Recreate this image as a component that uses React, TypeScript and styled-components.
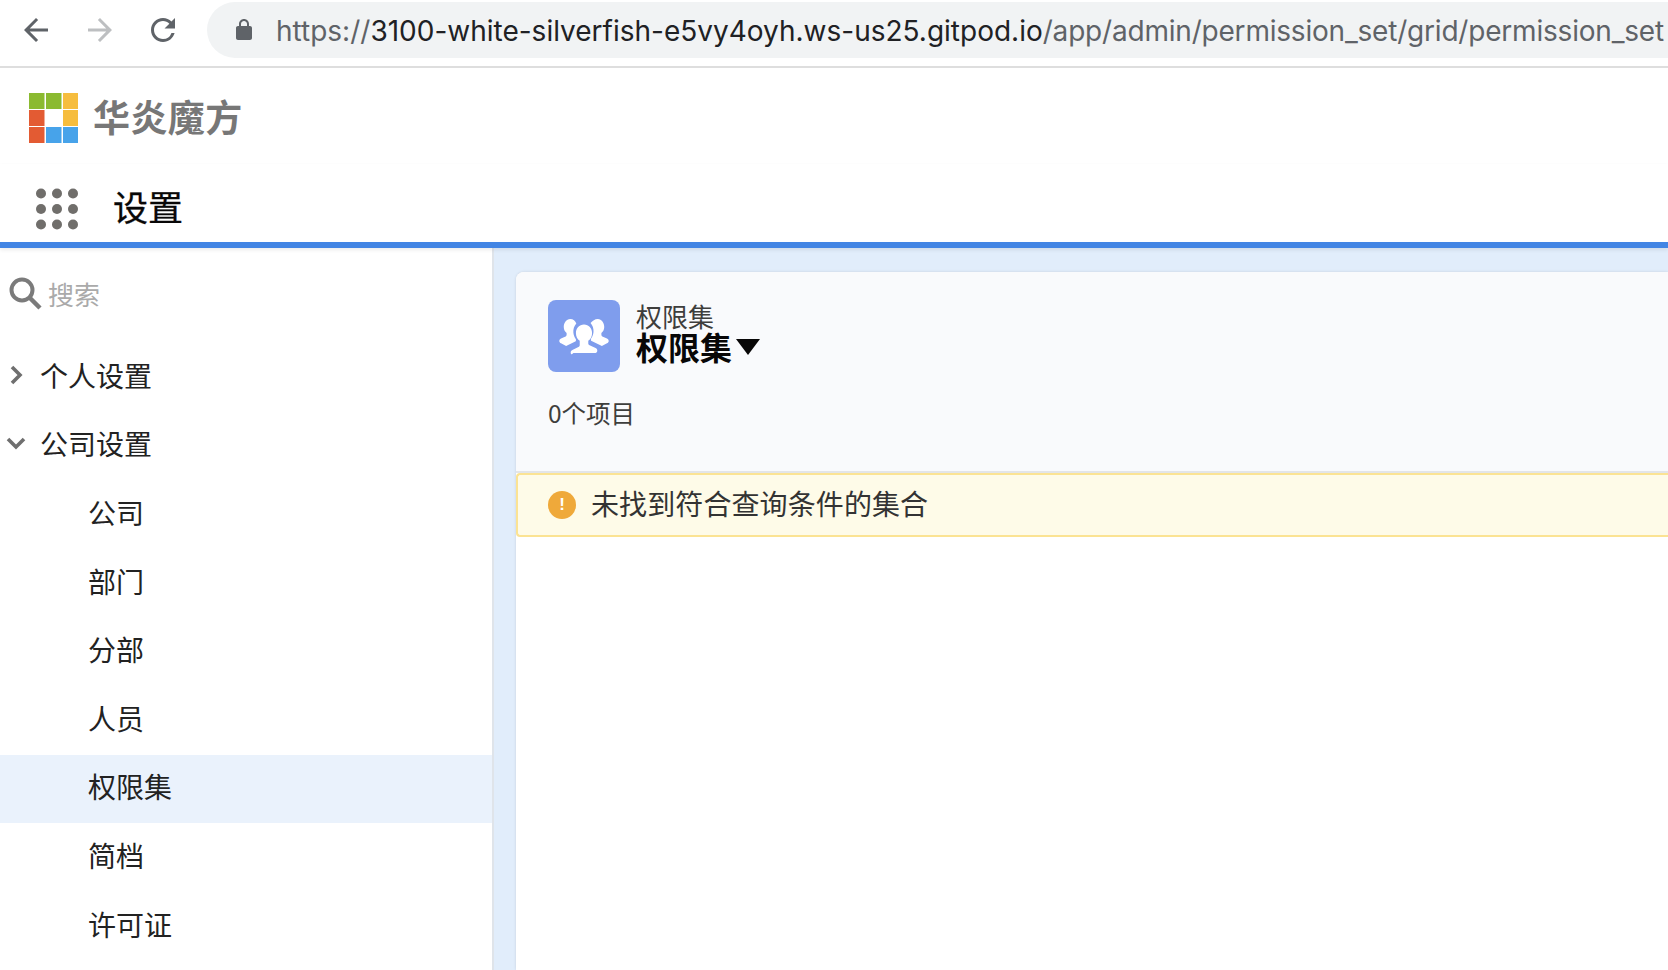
import React from "react";
import styled, { createGlobalStyle } from "styled-components";

const CJK = `"Noto Sans CJK SC", "Noto Sans", sans-serif`;

const Global = createGlobalStyle`
  html, body { margin: 0; padding: 0; background: #fff; overflow: hidden; }
  * { box-sizing: border-box; }
`;
const Page = styled.div`
  width: 1668px; height: 970px; overflow: hidden; display: flex; flex-direction: column;
  font-family: ${CJK}; color: #222;
`;
const BrowserBar = styled.div`
  flex: none; height: 68px; display: flex; align-items: flex-start; border-bottom: 2px solid #dedede;
  padding: 2px 0 0 22px; overflow: hidden;
`;
const NavIcon = styled.svg<{ $color: string; $gap: number }>`
  flex: none; width: 36px; height: 36px; margin: 10px ${p => p.$gap}px 0 -4px; fill: ${p => p.$color};
`;
const AddressBar = styled.div`
  flex: 1; min-width: 0; height: 56px; background: #f1f3f4; border-radius: 28px 0 0 28px;
  display: flex; align-items: center; padding-left: 25px; white-space: nowrap; overflow: hidden;
`;
const Lock = styled.svg`
  flex: none; width: 24px; height: 24px; fill: #5f6368; margin-right: 20px;
`;
const UrlHost = styled.span`
  font-family: Inter, "Liberation Sans", sans-serif; font-size: 28px; color: #202124; padding-top: 1px;
`;
const UrlScheme = styled(UrlHost)`
  color: #5f6368;
`;
const UrlPath = styled(UrlScheme)`
  letter-spacing: -.2px;
`;
const LogoRow = styled.div`
  flex: none; height: 96px; display: flex; align-items: center; padding: 0 0 0 29px; gap: 15px;
`;
const LogoMark = styled.svg`
  flex: none; width: 49px; height: 50px; margin-top: 4px;
`;
const LogoText = styled.div`
  font-size: 37px; font-weight: 700; color: #777; line-height: 50px; letter-spacing: .4px;
`;
const AppBar = styled.div`
  flex: none; height: 84px; display: flex; align-items: center; padding: 0 0 0 35px; gap: 34px;
  border-bottom: 6px solid #4285e4; box-shadow: 0 2px 4px rgba(0,0,0,.08); position: relative; z-index: 1;
`;
const Dots = styled.svg`
  flex: none; width: 44px; height: 42px; fill: #706e6b; margin-top: 12px;
`;
const AppTitle = styled.div`
  font-size: 35px; font-weight: 400; color: #080707; line-height: 50px; margin-top: 6px;
  -webkit-text-stroke: .3px #080707;
`;
const Shell = styled.div`
  flex: 1; min-height: 0; display: flex;
`;
const Sidebar = styled.nav`
  flex: none; width: 494px; background: #fff; border-right: 2px solid #dfe4ea;
`;
const SearchRow = styled.div`
  height: 95px; display: flex; align-items: center; padding: 0 0 4px 9px; gap: 6px;
`;
const SearchIcon = styled.svg`
  flex: none; width: 33px; height: 33px; fill: none; stroke: #7b7b7b; stroke-width: 4;
`;
const SearchHint = styled.div`
  font-size: 26px; color: #aaa; line-height: 40px;
`;
const Row = styled.div<{ $selected?: boolean; $child?: boolean }>`
  height: 68.6px; display: flex; align-items: center; font-size: 28px; color: #222;
  padding: 0 0 5px ${p => (p.$child ? 88 : 0)}px;
  background: ${p => (p.$selected ? "#eaf2fc" : "transparent")};
`;
const ChevronBox = styled.svg`
  flex: none; width: 32px; height: 32px; margin-right: 8px; fill: none; stroke: #6f6f6f; stroke-width: 3.6;
`;
const Main = styled.main`
  flex: 1; min-width: 0; background: #e1edfb; padding: 24px 0 0 22px; display: flex;
`;
const Card = styled.section`
  flex: 1; background: #fff; border-radius: 8px 0 0 0; box-shadow: 0 0 3px rgba(0,0,0,.12);
`;
const CardHeader = styled.header`
  height: 201px; background: #f9fafc; border-radius: 8px 0 0 0; padding: 28px 0 0 32px;
  border-bottom: 2px solid #e3e5e8;
`;
const TitleRow = styled.div`
  display: flex; align-items: center; gap: 16px;
`;
const ObjectIcon = styled.div`
  flex: none; width: 72px; height: 72px; border-radius: 8px; background: #7f9ded;
  display: flex; align-items: center; justify-content: center;
`;
const GroupSvg = styled.svg`
  width: 50px; height: 38px; fill: #fff;
`;
const Titles = styled.div`
  display: flex; flex-direction: column; padding-bottom: 7px;
`;
const Eyebrow = styled.div`
  font-size: 26px; line-height: 28px; color: #3e3e3c;
`;
const TitleLine = styled.div`
  display: flex; align-items: center; gap: 4px; font-size: 32px; line-height: 36px; font-weight: 700; color: #080707;
  margin-top: -2px;
`;
const Caret = styled.svg`
  flex: none; width: 24px; height: 16px; fill: #080707; margin-top: 2px;
`;
const Count = styled.div`
  margin-top: 23px; font-size: 24.5px; line-height: 36px; color: #3e3e3c;
`;
const Alert = styled.div`
  height: 64px; display: flex; align-items: center; gap: 15px; padding-left: 30px;
  background: #fefbe8; border: 2px solid #fbe393; border-right: 0; border-radius: 4px 0 0 4px;
  font-size: 28px; color: #333;
`;
const AlertText = styled.span`
  line-height: 40px; margin-top: -4px; letter-spacing: .1px;
`;
const AlertIcon = styled.div`
  flex: none; width: 28px; height: 28px; border-radius: 50%; background: #efa93a; color: #fff;
  display: flex; align-items: center; justify-content: center;
  font-size: 17px; font-weight: 700; font-family: "Liberation Sans", sans-serif;
`;

const squares: [number, number, string][] = [
  [0, 0, "#8bba30"], [1, 0, "#8bba30"], [2, 0, "#f6bd3e"],
  [0, 1, "#e35b33"], [2, 1, "#f6bd3e"],
  [0, 2, "#e35b33"], [1, 2, "#47a3ea"], [2, 2, "#47a3ea"],
];
const children = ["公司", "部门", "分部", "人员", "权限集", "简档", "许可证"];

export default function App() {
  return (
    <Page>
      <Global />
      <BrowserBar>
        <NavIcon $color="#5f6368" $gap={32} viewBox="0 0 24 24">
          <path d="M20 11H7.83l5.59-5.59L12 4l-8 8 8 8 1.41-1.41L7.83 13H20v-2z" />
        </NavIcon>
        <NavIcon $color="#bdbfc1" $gap={31} viewBox="0 0 24 24">
          <path d="M4 11h12.17l-5.59-5.59L12 4l8 8-8 8-1.41-1.41L16.17 13H4v-2z" />
        </NavIcon>
        <NavIcon $color="#5f6368" $gap={26} viewBox="0 0 24 24">
          <path d="M17.65 6.35A7.958 7.958 0 0 0 12 4c-4.42 0-7.99 3.58-7.99 8s3.57 8 7.99 8c3.73 0 6.84-2.55 7.73-6h-2.08A5.99 5.99 0 0 1 12 18c-3.31 0-6-2.69-6-6s2.69-6 6-6c1.66 0 3.14.69 4.22 1.78L13 11h7V4l-2.35 2.35z" />
        </NavIcon>
        <AddressBar>
          <Lock viewBox="0 0 24 24">
            <path d="M18 8h-1V6c0-2.76-2.24-5-5-5S7 3.24 7 6v2H6c-1.1 0-2 .9-2 2v10c0 1.1.9 2 2 2h12c1.1 0 2-.9 2-2V10c0-1.1-.9-2-2-2zM9 6c0-1.66 1.34-3 3-3s3 1.34 3 3v2H9V6z" />
          </Lock>
          <UrlScheme>https://</UrlScheme>
          <UrlHost>3100-white-silverfish-e5vy4oyh.ws-us25.gitpod.io</UrlHost>
          <UrlPath>/app/admin/permission_set/grid/permission_set</UrlPath>
        </AddressBar>
      </BrowserBar>
      <LogoRow>
        <LogoMark viewBox="0 0 49 50">
          {squares.map(([c, r, f]) => (
            <rect key={`${c}-${r}`} x={c * 17} y={r * 17} width="15.5" height="16" fill={f} />
          ))}
        </LogoMark>
        <LogoText>华炎魔方</LogoText>
      </LogoRow>
      <AppBar>
        <Dots viewBox="0 0 44 42">
          {[0, 1, 2].flatMap(r =>
            [0, 1, 2].map(c => <circle key={`${r}${c}`} cx={6 + c * 16} cy={5.5 + r * 15.5} r="5" />)
          )}
        </Dots>
        <AppTitle>设置</AppTitle>
      </AppBar>
      <Shell>
        <Sidebar>
          <SearchRow>
            <SearchIcon viewBox="0 0 33 33">
              <circle cx="13" cy="13" r="10.5" />
              <path d="M20.5 20.5L31 31" strokeWidth="4.5" />
            </SearchIcon>
            <SearchHint>搜索</SearchHint>
          </SearchRow>
          <Row>
            <ChevronBox viewBox="0 0 32 32"><path d="M12 8l8 8-8 8" /></ChevronBox>
            个人设置
          </Row>
          <Row>
            <ChevronBox viewBox="0 0 32 32"><path d="M8 12l8 8 8-8" /></ChevronBox>
            公司设置
          </Row>
          {children.map(c => (
            <Row key={c} $child $selected={c === "权限集"}>{c}</Row>
          ))}
        </Sidebar>
        <Main>
          <Card>
            <CardHeader>
              <TitleRow>
                <ObjectIcon>
                  <GroupSvg viewBox="0 0 52 40">
                    <path d="M26 8c5 0 8.5 4 8.5 9 0 3.4-1.6 6.3-4 8v2.6c0 1 .5 1.7 1.4 2.1l6.3 3c1.2.6 1.8 1.6 1.8 2.8 0 1.6-1.3 2.5-2.8 2.5H14.8C13.3 40 12 39.1 12 37.5c0-1.2.6-2.2 1.8-2.8l6.3-3c.9-.4 1.4-1.1 1.4-2.1V25c-2.4-1.7-4-4.6-4-8 0-5 3.5-9 8.5-9z" />
                    <path d="M11.5 2c3 0 5.500 2 6.400 4.800-2.200 2.400-3.400 5.800-3.100 9.500.2 2.700 1.100 5 2.700 7v1.600c-.1.4-.3.7-.7.9L9.300 29.500 7.200 30.600 1.800 27.700C.7 27.100 0 26.300 0 25.200c0-1.100.7-2 1.800-2.500l4.900-2.300c.7-.3 1-.9 1-1.600v-2c-1.900-1.400-3-3.600-3-6.300C4.700 6 7.400 2 11.500 2z" />
                    <path d="M40.500 2c4.100 0 6.800 4 6.800 8.500 0 2.700-1.100 4.900-3 6.300v2c0 .7.3 1.300 1 1.600l4.900 2.300c1.100.5 1.800 1.400 1.800 2.500 0 1.100-.7 1.900-1.800 2.500l-5.400 2.900-2.100-1.100-8.700-4.200c-.4-.2-.6-.5-.7-.9v-1.600c1.600-2 2.500-4.300 2.700-7 .3-3.700-.9-7.100-3.100-9.500C35 4 37.500 2 40.500 2z" />
                  </GroupSvg>
                </ObjectIcon>
                <Titles>
                  <Eyebrow>权限集</Eyebrow>
                  <TitleLine>
                    权限集
                    <Caret viewBox="0 0 24 16"><path d="M0 0h24L12 16z" /></Caret>
                  </TitleLine>
                </Titles>
              </TitleRow>
              <Count>0个项目</Count>
            </CardHeader>
            <Alert>
              <AlertIcon>!</AlertIcon>
              <AlertText>未找到符合查询条件的集合</AlertText>
            </Alert>
          </Card>
        </Main>
      </Shell>
    </Page>
  );
}
